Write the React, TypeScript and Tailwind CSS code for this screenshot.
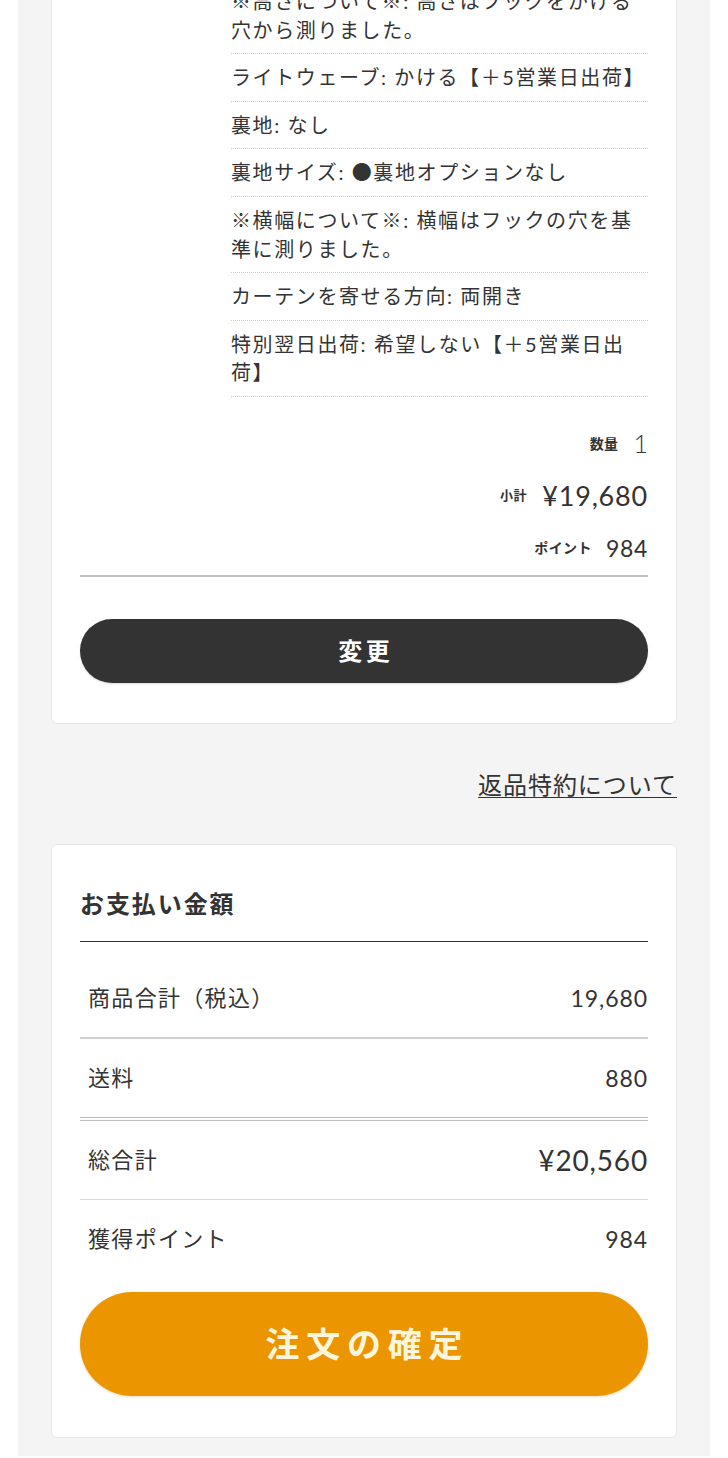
import React from "react";

const options: React.ReactNode[] = [
  "※高さについて※: 高さはフックをかける穴から測りました。",
  "ライトウェーブ: かける【＋5営業日出荷】",
  "裏地: なし",
  <>
    裏地サイズ: <span style={{ fontFamily: '"Noto Sans CJK JP", sans-serif' }}>●</span>裏地オプションなし
  </>,
  "※横幅について※: 横幅はフックの穴を基準に測りました。",
  "カーテンを寄せる方向: 両開き",
  "特別翌日出荷: 希望しない【＋5営業日出荷】",
];

const font = { fontFamily: 'Lato, "Noto Sans CJK JP", sans-serif' };

export default function App() {
  return (
    <div className="bg-white min-h-[1458px] overflow-hidden text-[#333]" style={font}>
      <div className="mx-[18px] bg-[#f4f4f4] px-[33px] pb-[18px]">
        {/* Product card (scrolled) */}
        <div className="bg-white border border-[#e6e6e6] border-t-0 rounded-b-[6px] px-[28px] pb-[40px]">
          <div className="flex">
            <div className="w-[151px] shrink-0" />
            <ul className="flex-1 -mt-[22px]">
              {options.map((o, i) => (
                <li
                  key={i}
                  className="py-[9px] leading-[28.6px] text-[20px] tracking-[0.08em] border-b border-dotted border-[#cfcfcf]"
                >
                  {o}
                </li>
              ))}
            </ul>
          </div>
          <div className="flex flex-col items-end gap-[22px] pt-[32px] pb-[12px] border-b-2 border-[#c4c4c4]">
            <div className="flex items-center h-[30px]">
              <span className="text-[14px] font-bold mr-[15px] tracking-[0.03em]">数量</span>
              <span className="text-[25px] font-light">1</span>
            </div>
            <div className="flex items-center h-[30px]">
              <span className="text-[13px] font-bold mr-[15px] tracking-[0.05em]">小計</span>
              <span className="text-[27px] tracking-[0.03em]">¥19,680</span>
            </div>
            <div className="flex items-center h-[30px]">
              <span className="text-[14px] font-bold mr-[14px] tracking-[0.03em]">ポイント</span>
              <span className="text-[23px] tracking-[0.03em]">984</span>
            </div>
          </div>
          <button className="mt-[42px] w-full h-[64px] rounded-full bg-[#333] text-white text-[24px] font-bold tracking-[0.15em] pl-[0.15em] shadow-[0_1px_2px_rgba(0,0,0,0.15)]">
            変更
          </button>
        </div>

        {/* Return policy link */}
        <div className="flex justify-end mt-[45px]">
          <a className="text-[24px] leading-[32px] tracking-[0.04em] underline underline-offset-[3px] decoration-1 text-[#333]">
            返品特約について
          </a>
        </div>

        {/* Payment card */}
        <div className="mt-[43px] bg-white border border-[#e6e6e6] rounded-[6px] px-[28px] pt-[43px] pb-[41px]">
          <div className="text-[24px] leading-[32px] font-bold tracking-[0.08em] pb-[21px] border-b border-[#333]">
            お支払い金額
          </div>
          <div className="mt-[17px]">
            <div className="flex justify-between items-center py-[24px] leading-[30px] border-b-2 border-[#d0d0d0] pl-[8px]">
              <span className="text-[22px] tracking-[0.06em]">商品合計（税込）</span>
              <span className="text-[23px] tracking-[0.04em]">19,680</span>
            </div>
            <div className="flex justify-between items-center py-[24px] leading-[30px] border-b-4 border-double border-[#bdbdbd] pl-[8px]">
              <span className="text-[22px] tracking-[0.06em]">送料</span>
              <span className="text-[23px] tracking-[0.04em]">880</span>
            </div>
            <div className="flex justify-between items-center py-[24px] leading-[30px] border-b border-[#d8d8d8] pl-[8px]">
              <span className="text-[22px] tracking-[0.06em]">総合計</span>
              <span className="text-[28px] tracking-[0.03em]">¥20,560</span>
            </div>
            <div className="flex justify-between items-center py-[24px] leading-[30px] pl-[8px]">
              <span className="text-[22px] tracking-[0.06em]">獲得ポイント</span>
              <span className="text-[23px] tracking-[0.04em]">984</span>
            </div>
          </div>
          <button className="mt-[14px] w-full h-[104px] rounded-full bg-[#eb9600] text-[#fff5dc] text-[34px] font-bold tracking-[0.2em] pl-[0.2em] shadow-[0_1px_3px_rgba(200,120,0,0.25)]">
            注文の確定
          </button>
        </div>
      </div>
    </div>
  );
}
